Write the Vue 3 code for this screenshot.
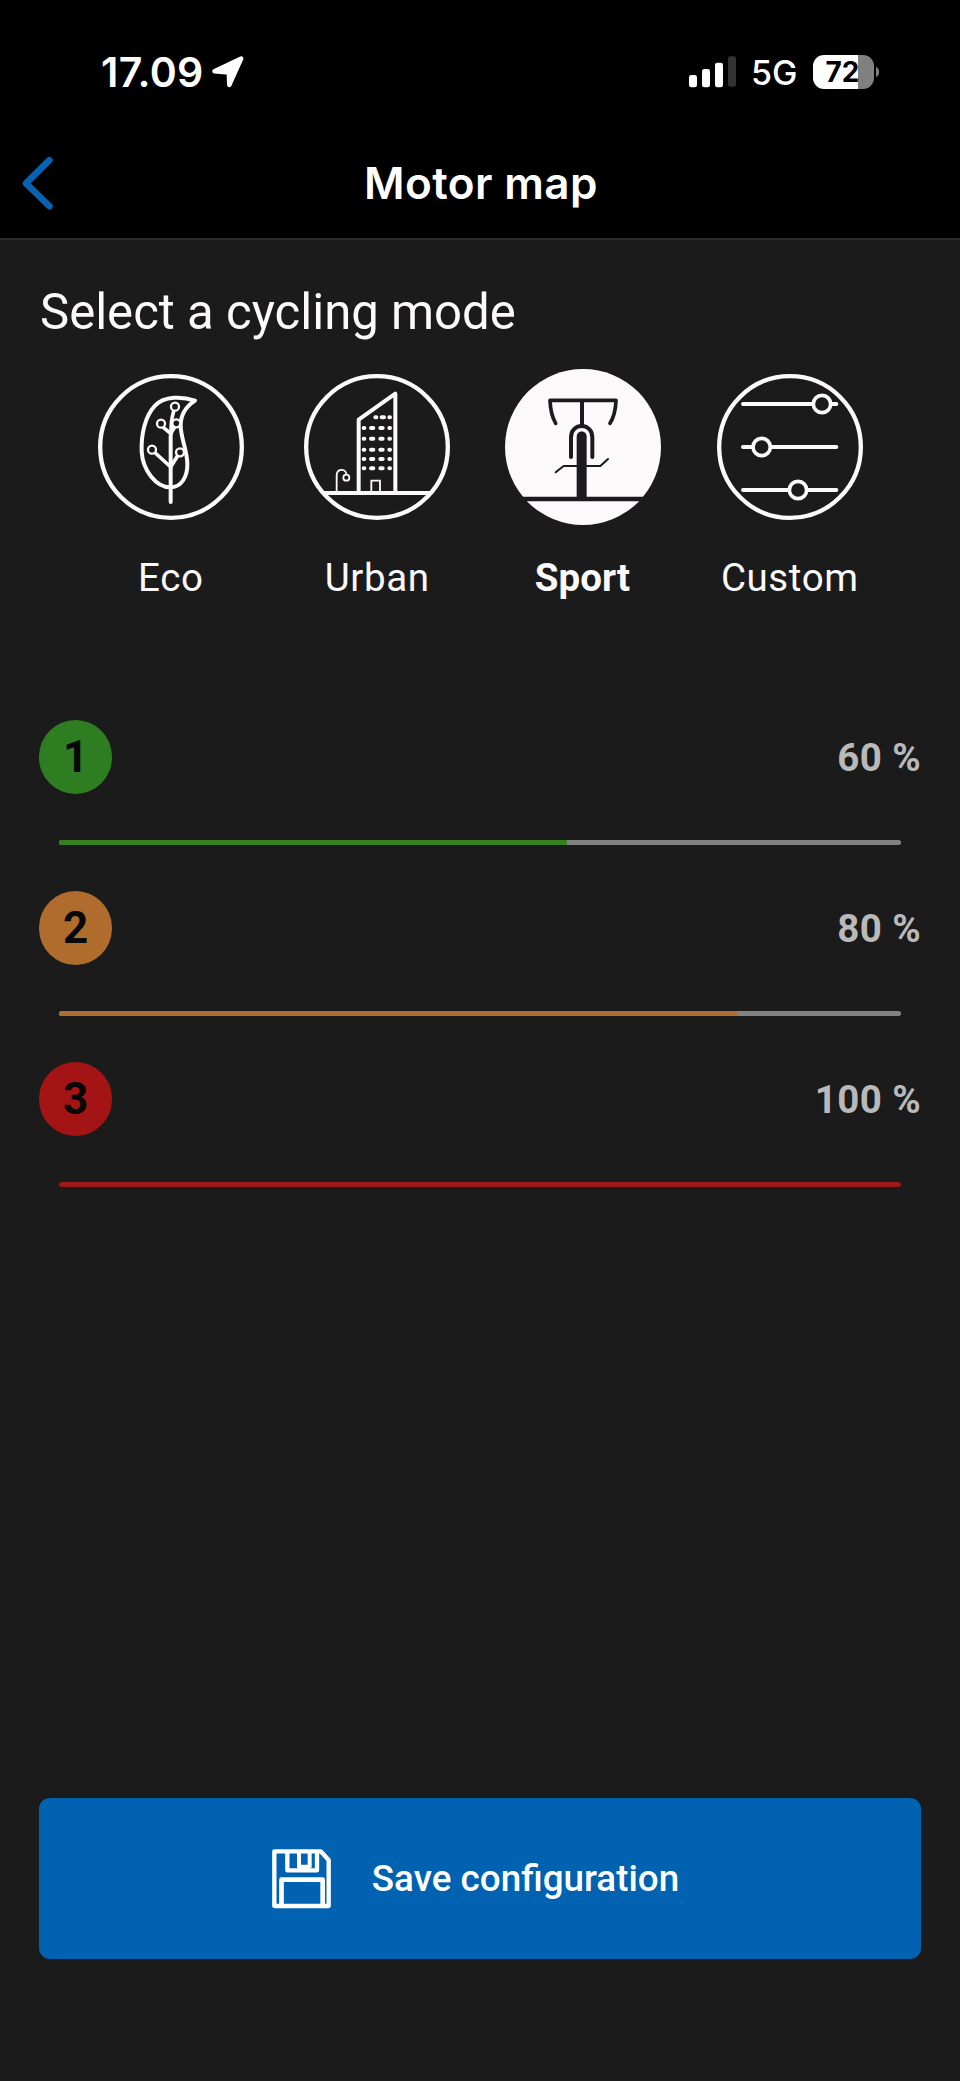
<script setup>
import { ref } from 'vue'

const modes = [
  { id: 'eco', label: 'Eco' },
  { id: 'urban', label: 'Urban' },
  { id: 'sport', label: 'Sport' },
  { id: 'custom', label: 'Custom' },
]
const selected = ref('sport')

const levels = [
  { level: 1, value: 60, fill: 60.3, tone: 'green' },
  { level: 2, value: 80, fill: 80.6, tone: 'orange' },
  { level: 3, value: 100, fill: 100, tone: 'red' },
]

const windowRows = [205, 237.5, 270, 298, 326]
</script>

<template>
  <div class="screen">
    <header class="top">
      <div class="status">
        <div class="clock">
          <span class="time">17.09</span>
          <svg class="arrow" width="34" height="34" viewBox="0 0 34 34">
            <path d="M30.2 3.6 L18.3 30 L17.7 17.5 L3.4 16.3 Z" fill="#fff" stroke="#fff" stroke-width="4.4" stroke-linejoin="round" />
          </svg>
        </div>
        <div class="signals">
          <svg class="bars" width="48" height="32" viewBox="0 0 48 32">
            <rect x="0" y="19" width="8" height="12.3" rx="2.4" fill="#fff" />
            <rect x="13" y="13" width="8" height="18.3" rx="2.4" fill="#fff" />
            <rect x="26" y="6.7" width="8" height="24.6" rx="2.4" fill="#fff" />
            <rect x="39" y="0.3" width="8" height="30.5" rx="2.4" fill="#333" />
          </svg>
          <span class="net">5G</span>
          <div class="battery"><span>72</span></div>
          <svg class="nub" width="4" height="12" viewBox="0 0 4 12">
            <path d="M0 0.8 C4.2 2.6 4.2 9.2 0 11 Z" fill="#808080" />
          </svg>
        </div>
      </div>
      <nav class="nav">
        <svg class="back" width="36" height="56" viewBox="0 0 36 56">
          <path d="M29.4 5.2 L6 28.3 L29.4 51.2" fill="none" stroke="#0862b4" stroke-width="6.6" stroke-linecap="round" stroke-linejoin="round" />
        </svg>
        <h1>Motor map</h1>
      </nav>
    </header>

    <main class="body">
      <h2>Select a cycling mode</h2>

      <div class="modes">
        <button v-for="m in modes" :key="m.id" class="mode" :class="{ active: m.id === selected }" @click="selected = m.id">
          <svg v-if="m.id === 'eco'" class="icon" viewBox="-240 -240 480 480">
            <g transform="translate(-272 -262)" fill="none" stroke="#fbf9fa" stroke-linecap="round" stroke-linejoin="round">
              <circle cx="272" cy="262" r="212.5" stroke-width="13" />
              <path d="M344 123 C306 110 252 108 224 138 C194 170 182 224 184 276 C187 330 226 383 270 383 C304 383 322 350 321 312 C320 268 301 236 301 197 C301 160 321 138 344 123 Z" stroke-width="12" />
              <path d="M271 427 V228" stroke-width="12" />
              <path d="M273 222 C271 198 274 175 280 155 M250 204 L271 222 L283 202 M225 280 L271 322 L292 288" stroke-width="11" />
              <g fill="#1b1b1b" stroke-width="7">
                <circle cx="284" cy="141" r="12" />
                <circle cx="242" cy="192" r="12" />
                <circle cx="288" cy="191" r="12" />
                <circle cx="215" cy="270" r="12" />
                <circle cx="299" cy="278" r="12" />
              </g>
            </g>
          </svg>

          <svg v-else-if="m.id === 'urban'" class="icon" viewBox="-240 -240 480 480">
            <g transform="translate(-261 -262)" fill="none" stroke="#fbf9fa">
              <circle cx="261" cy="262" r="212.5" stroke-width="13" />
              <path d="M101 400 H421" stroke-width="12" />
              <path d="M206 400 V180 L316 102 V400" stroke-width="12" stroke-linejoin="round" />
              <path d="M244 396 V363 H270 V396" stroke-width="5.5" />
              <path d="M140 396 V348 C140 326 166 326 169 343" stroke-width="5.5" />
              <circle cx="169" cy="354" r="9" stroke-width="5.5" />
              <g stroke-width="12" stroke-linecap="round">
                <path d="M256 173 H259 M275 173 H282 M298 173 H300" />
                <path v-for="y in windowRows" :key="y" :d="`M221 ${y} H223 M243 ${y} H250 M271 ${y} H278 M298 ${y} H300`" />
              </g>
            </g>
          </svg>

          <svg v-else-if="m.id === 'sport'" class="icon" viewBox="-240 -240 480 480">
            <g transform="translate(-281 -262)" fill="none" stroke="#1b1a1c" stroke-linejoin="round" stroke-linecap="round">
              <circle cx="281" cy="262" r="234" fill="#fbf9fa" stroke="none" />
              <path d="M199 191 C187 170 183 148 182 122 H380 C379 148 374 172 362 191" stroke-width="11" />
              <path d="M278 124 V196" stroke-width="12" />
              <path d="M245 292 V233 C245 188 309 188 309 233 V292" stroke-width="12" />
              <path d="M262 418 V231 C262 210 292 210 292 231 V418 Z" fill="#1b1a1c" stroke="none" />
              <path d="M199 338 L223 319 H333 L356 298" stroke-width="6" />
              <path d="M88 418 H474" stroke-width="14" stroke-linecap="butt" />
            </g>
          </svg>

          <svg v-else class="icon" viewBox="-240 -240 480 480">
            <g transform="translate(-270 -262)" fill="none" stroke="#fbf9fa" stroke-linecap="round">
              <circle cx="270" cy="262" r="212.5" stroke-width="13" />
              <path d="M129 133 H409 M129 262 H409 M129 391 H409" stroke-width="12" />
              <g fill="#1b1b1b" stroke-width="11">
                <circle cx="366" cy="133" r="26" />
                <circle cx="185" cy="262" r="26" />
                <circle cx="294" cy="391" r="26" />
              </g>
            </g>
          </svg>
          <span class="label">{{ m.label }}</span>
        </button>
      </div>

      <section class="levels">
        <div v-for="l in levels" :key="l.level" class="level" :class="l.tone">
          <div class="row">
            <span class="badge">{{ l.level }}</span>
            <span class="value">{{ l.value }} %</span>
          </div>
          <div class="track"><div class="fill" :style="{ width: l.fill + '%' }"></div></div>
        </div>
      </section>
    </main>

    <footer class="footer">
      <button class="save">
        <svg width="60" height="60" viewBox="0 0 180 180">
          <g fill="none" stroke="#fff" stroke-linejoin="round">
            <path d="M7 7 H146 L170 33 V171 H7 Z" stroke-width="13" />
            <path d="M46 12 V64 H135 V12" stroke-width="13" />
            <path d="M81 12 V53 H113 V12" stroke-width="12" />
            <path d="M28.5 170 V92 H152 V170" stroke-width="14" />
          </g>
        </svg>
        <span>Save configuration</span>
      </button>
    </footer>
  </div>
</template>

<style>
body {
  margin: 0;
  background: #1b1b1b;
}
</style>

<style scoped>
.screen {
  width: 960px;
  height: 2081px;
  display: flex;
  flex-direction: column;
  background: #1b1b1b;
  color: #fbf9fa;
  font-family: Roboto, sans-serif;
  overflow: hidden;
}
h1,
h2 {
  margin: 0;
}
button {
  border: 0;
  padding: 0;
  background: none;
  color: inherit;
  font: inherit;
}
svg {
  display: block;
  flex: none;
}

.top {
  box-sizing: border-box;
  height: 240px;
  background: #000;
  border-bottom: 2px solid #2a2a2a;
  color: #fff;
  font-family: Inter, sans-serif;
}
.status {
  display: flex;
  justify-content: space-between;
  align-items: center;
  height: 143px;
  padding: 0 79px 0 101px;
}
.clock,
.signals {
  display: flex;
  align-items: center;
}
.time {
  font-size: 41px;
  font-weight: 600;
  letter-spacing: 0.3px;
  line-height: 50px;
}
.arrow {
  margin-left: 7px;
}
.net {
  margin-left: 14px;
  width: 47px;
  font-size: 34px;
  font-weight: 500;
  line-height: 40px;
  padding-top: 3px;
}
.battery {
  box-sizing: border-box;
  display: flex;
  align-items: center;
  justify-content: center;
  width: 61px;
  height: 34px;
  margin-left: 15px;
  padding-right: 2px;
  border-radius: 11px;
  background: linear-gradient(90deg, #fff 44.5px, #808080 44.5px);
  color: #000;
  font-size: 28px;
  font-weight: 700;
  line-height: 34px;
}
.nub {
  margin: 0 1px 0 2px;
}
.nav {
  display: grid;
  grid-template-columns: 36px 1fr 36px;
  align-items: center;
  height: 80px;
  padding: 0 19px 0 20px;
}
h1 {
  padding-left: 1px;
  text-align: center;
  font-size: 44px;
  font-weight: 600;
  letter-spacing: 0.4px;
  line-height: 56px;
}

.body {
  flex: 1;
  padding: 42px 39px 0;
}
h2 {
  padding-left: 1px;
  font-size: 49.1px;
  font-weight: 400;
  line-height: 60px;
}
.modes {
  display: grid;
  grid-template-columns: repeat(4, 206.3px);
  margin: 25.4px 0 0 28.7px;
}
.mode {
  display: flex;
  flex-direction: column;
  align-items: center;
}
.icon {
  width: 160px;
  height: 160px;
}
.label {
  margin-top: 28px;
  font-size: 38.5px;
  letter-spacing: 0.6px;
  line-height: 46px;
}
.active .label {
  padding-right: 2px;
  font-weight: 700;
  letter-spacing: 0;
}

.levels {
  display: flex;
  flex-direction: column;
  gap: 46px;
  margin-top: 118.6px;
}
.row {
  display: flex;
  align-items: center;
  justify-content: space-between;
  height: 74px;
}
.badge {
  width: 73.4px;
  height: 73.4px;
  border-radius: 50%;
  background: var(--tone);
  color: #080808;
  font-size: 44px;
  font-weight: 700;
  line-height: 74px;
  text-align: center;
}
.value {
  padding-top: 1px;
  color: #b9b9b9;
  font-size: 38.5px;
  font-weight: 700;
  letter-spacing: 0.4px;
}
.track {
  height: 5px;
  margin: 46px 20px 0 19.5px;
  border-radius: 3px;
  background: #828282;
  overflow: hidden;
}
.fill {
  height: 100%;
  background: var(--bar);
}
.green {
  --tone: #2f7d21;
  --bar: #35801f;
}
.orange {
  --tone: #af6c2d;
  --bar: #b16e32;
}
.red {
  --tone: #a51415;
  --bar: #9f1719;
}

.footer {
  padding: 0 39px 122px;
}
.save {
  display: flex;
  align-items: center;
  justify-content: center;
  gap: 40px;
  box-sizing: border-box;
  width: 882px;
  height: 161px;
  padding-right: 9px;
  border-radius: 11px;
  background: #0062b0;
  color: #fff;
  font-size: 36.8px;
  font-weight: 500;
}
</style>
